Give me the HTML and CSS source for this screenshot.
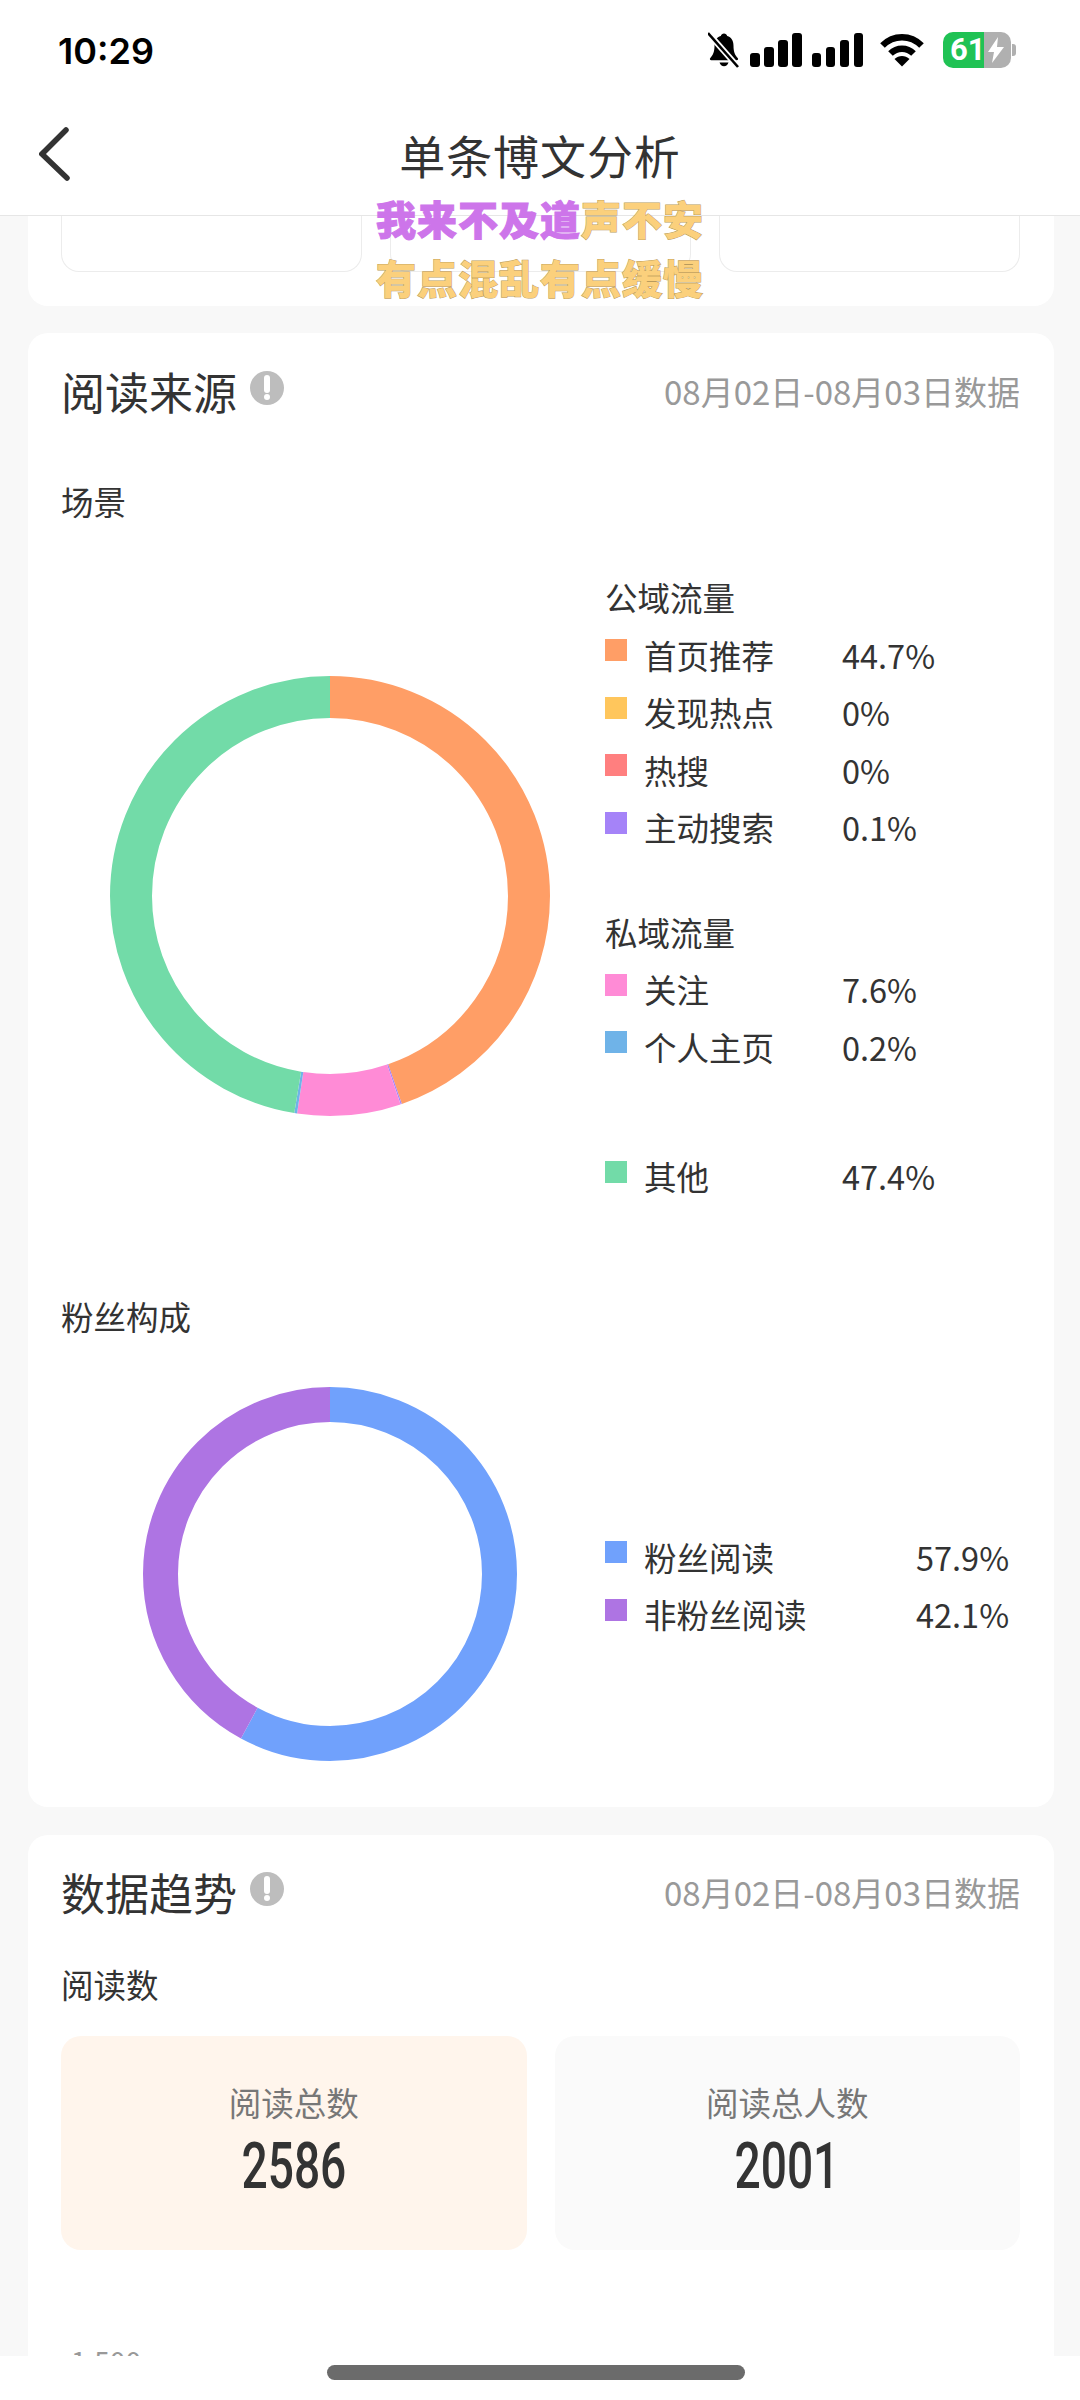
FILE: index.html
```html
<!DOCTYPE html>
<html lang="zh-CN">
<head>
  <meta charset="UTF-8" />
  <meta name="viewport" content="width=device-width, initial-scale=1" />
  <title>单条博文分析</title>
  <link rel="stylesheet" href="styles.css">
</head>
<body>
  <div class="screen">
    <header class="top">
      <div class="statusbar">
        <span class="time">10:29</span>
        <div class="status-icons">
          <svg class="ic-bell" width="32" height="36" viewBox="0 0 32 36">
            <path d="M16 1.5c1.6 0 2.8 1 3.2 2.6 4.2 1.3 6.3 4.8 6.3 9.6 0 5.6 1.2 9 4.2 12.2.9 1 .3 2.3-1 2.3H3.3c-1.3 0-1.9-1.3-1-2.3 3-3.2 4.2-6.6 4.2-12.2 0-4.8 2.1-8.3 6.3-9.6.4-1.6 1.6-2.6 3.2-2.6z" fill="#000"/>
            <path d="M11.5 30.5h9c-.6 2.3-2.4 3.7-4.5 3.7s-3.9-1.4-4.5-3.7z" fill="#000"/>
            <path d="M1 2l29 33" stroke="#fff" stroke-width="6"/>
            <path d="M0 1l30 34" stroke="#000" stroke-width="2.6"/>
          </svg>
          <div class="signal"><i class="b1"></i><i class="b2"></i><i class="b3"></i><i class="b4"></i></div>
          <div class="signal"><i class="b1"></i><i class="b2"></i><i class="b3"></i><i class="b4"></i></div>
          <svg class="ic-wifi" width="46" height="34" viewBox="0 0 46 34">
            <path d="M3.5 12.5C14.5 1.5 31.5 1.5 42.5 12.5" fill="none" stroke="#000" stroke-width="6.5"/>
            <path d="M11.5 20.5C18 14 28 14 34.5 20.5" fill="none" stroke="#000" stroke-width="6.5"/>
            <path d="M15.5 26c4.3-4 10.7-4 15 0L23 33.5z" fill="#000"/>
          </svg>
          <div class="battery">
            <span class="battery-num">61</span>
            <svg class="ic-bolt" width="18" height="26" viewBox="0 0 18 26">
              <path d="M11 0L1 15h6l-2 11L17 10h-7z" fill="#fff"/>
            </svg>
          </div>
        </div>
      </div>
      <nav class="navbar">
        <svg class="ic-back" width="34" height="56" viewBox="0 0 34 56">
          <path d="M27 3L3 27l25 24" fill="none" stroke="#333" stroke-width="5.5" stroke-linecap="round" stroke-linejoin="miter"/>
        </svg>
        <h1 class="nav-title">单条博文分析</h1>
      </nav>
    </header>

    <!-- 上一张卡片，只露出底部 -->
    <section class="card card-stub">
      <div class="stub-box"></div>
      <div class="stub-box"></div>
      <div class="stub-box"></div>
    </section>

    <!-- 阅读来源 -->
    <section class="card card-source">
      <div class="card-head">
        <h2 class="card-title">阅读来源</h2>
        <svg class="ic-info" width="34" height="34" viewBox="0 0 34 34">
          <circle cx="17" cy="17" r="17" fill="#bdbdbd"/>
          <path d="M17 7v12" stroke="#fff" stroke-width="6" stroke-linecap="round"/>
          <circle cx="17" cy="26" r="3" fill="#fff"/>
        </svg>
        <span class="card-date">08月02日-08月03日数据</span>
      </div>

      <div class="sub-title sub-scene">场景</div>
      <div class="chart-row chart-scene">
        <div class="donut-cell">
          <svg class="donut" width="440" height="440" viewBox="0 0 440 440">
            <g fill="none" stroke-width="42" transform="rotate(-90 220 220)">
              <circle cx="220" cy="220" r="199" pathLength="100" stroke="#ff9e66" stroke-dasharray="44.7 55.3" stroke-dashoffset="0"/>
              <circle cx="220" cy="220" r="199" pathLength="100" stroke="#a583f8" stroke-dasharray="0.1 99.9" stroke-dashoffset="-44.7"/>
              <circle cx="220" cy="220" r="199" pathLength="100" stroke="#ff8bd6" stroke-dasharray="7.6 92.4" stroke-dashoffset="-44.8"/>
              <circle cx="220" cy="220" r="199" pathLength="100" stroke="#6fb3e8" stroke-dasharray="0.2 99.8" stroke-dashoffset="-52.4"/>
              <circle cx="220" cy="220" r="199" pathLength="100" stroke="#72dba8" stroke-dasharray="47.4 52.6" stroke-dashoffset="-52.6"/>
            </g>
          </svg>
        </div>
        <div class="legend">
          <div class="legend-group group-public">
            <div class="legend-head">公域流量</div>
            <div class="legend-row"><i class="swatch c-orange"></i><span class="legend-name">首页推荐</span><span>44.7%</span></div>
            <div class="legend-row"><i class="swatch c-yellow"></i><span class="legend-name">发现热点</span><span>0%</span></div>
            <div class="legend-row"><i class="swatch c-red"></i><span class="legend-name">热搜</span><span>0%</span></div>
            <div class="legend-row"><i class="swatch c-purple"></i><span class="legend-name">主动搜索</span><span>0.1%</span></div>
          </div>
          <div class="legend-group group-private">
            <div class="legend-head">私域流量</div>
            <div class="legend-row"><i class="swatch c-pink"></i><span class="legend-name">关注</span><span>7.6%</span></div>
            <div class="legend-row"><i class="swatch c-blue"></i><span class="legend-name">个人主页</span><span>0.2%</span></div>
          </div>
          <div class="legend-group">
            <div class="legend-row"><i class="swatch c-green"></i><span class="legend-name">其他</span><span>47.4%</span></div>
          </div>
        </div>
      </div>

      <div class="sub-title sub-fans">粉丝构成</div>
      <div class="chart-row chart-fans">
        <div class="donut-cell">
          <svg class="donut" width="374" height="374" viewBox="0 0 374 374">
            <g fill="none" stroke-width="35" transform="rotate(-90 187 187)">
              <circle cx="187" cy="187" r="169.5" pathLength="100" stroke="#70a1fc" stroke-dasharray="57.9 42.1" stroke-dashoffset="0"/>
              <circle cx="187" cy="187" r="169.5" pathLength="100" stroke="#ae74e3" stroke-dasharray="42.1 57.9" stroke-dashoffset="-57.9"/>
            </g>
          </svg>
        </div>
        <div class="legend legend-fans">
          <div class="legend-row"><i class="swatch c-fans"></i><span class="legend-name">粉丝阅读</span><span>57.9%</span></div>
          <div class="legend-row"><i class="swatch c-nonfans"></i><span class="legend-name">非粉丝阅读</span><span>42.1%</span></div>
        </div>
      </div>
    </section>

    <!-- 数据趋势 -->
    <section class="card card-trend">
      <div class="card-head">
        <h2 class="card-title">数据趋势</h2>
        <svg class="ic-info" width="34" height="34" viewBox="0 0 34 34">
          <circle cx="17" cy="17" r="17" fill="#bdbdbd"/>
          <path d="M17 7v12" stroke="#fff" stroke-width="6" stroke-linecap="round"/>
          <circle cx="17" cy="26" r="3" fill="#fff"/>
        </svg>
        <span class="card-date">08月02日-08月03日数据</span>
      </div>
      <div class="sub-title sub-read">阅读数</div>
      <div class="stats">
        <div class="stat stat-active">
          <div class="stat-label">阅读总数</div>
          <div class="stat-num"><span>2586</span></div>
        </div>
        <div class="stat">
          <div class="stat-label">阅读总人数</div>
          <div class="stat-num"><span>2001</span></div>
        </div>
      </div>
      <div class="axis-label">1,500</div>
    </section>

    <!-- 歌词浮层 -->
    <div class="lyrics">
      <div class="lyric-line"><span class="lyric-done">我来不及道</span>声不安</div>
      <div class="lyric-line">有点混乱有点缓慢</div>
    </div>

    <div class="homebar"><span class="home-pill"></span></div>
  </div>
</body>
</html>
```

FILE: styles.css
```css
/* Base */
html, body {
  margin: 0;
  padding: 0;
}

body {
  font-family: "Noto Sans CJK SC", "Noto Sans", sans-serif;
  color: #333;
  background-color: #f8f8f8;
}

.screen {
  position: relative;
  width: 1080px;
  height: 2400px;
  overflow: hidden;
  background-color: #f8f8f8;
}

/* Status bar + nav */
.top {
  background-color: #fff;
  border-bottom: 1px solid #e6e6e6;
}

.statusbar {
  height: 95px;
  box-sizing: border-box;
  padding: 32px 69px 0 58px;
  display: flex;
  align-items: flex-start;
}

.time {
  font-family: Inter, sans-serif;
  font-size: 36px;
  font-weight: 600;
  line-height: 38px;
  color: #000;
}

.status-icons {
  margin-left: auto;
  display: flex;
  align-items: center;
}

.ic-bell { margin-right: 10px; }
.ic-wifi { margin: 0 18px 0 6px; }

.signal {
  display: flex;
  align-items: flex-end;
  gap: 4.5px;
  height: 34px;
  margin-right: 10px;
}

.signal i {
  display: block;
  width: 9.5px;
  background-color: #000;
  border-radius: 3px;
}

.signal .b1 { height: 14px; }
.signal .b2 { height: 20px; }
.signal .b3 { height: 27px; }
.signal .b4 { height: 34px; }

.battery {
  position: relative;
  width: 68px;
  height: 36px;
  border-radius: 10px;
  background: linear-gradient(to right, #20c254 0, #20c254 60%, #b0b0b0 60%, #b0b0b0 100%);
  display: flex;
  align-items: center;
  padding-left: 7px;
  box-sizing: border-box;
}

.battery::after {
  content: "";
  position: absolute;
  right: -5px;
  top: 12px;
  width: 4px;
  height: 12px;
  border-radius: 0 3px 3px 0;
  background-color: #b0b0b0;
}

.battery-num {
  font-family: Roboto, sans-serif;
  font-size: 31px;
  font-weight: 700;
  color: #fff;
  line-height: 36px;
}

.ic-bolt { margin-left: 1px; }

.navbar {
  height: 120px;
  display: flex;
  align-items: center;
  position: relative;
  justify-content: center;
}

.ic-back {
  position: absolute;
  left: 39px;
  top: 32px;
}

.nav-title {
  margin: -2px 0 0;
  font-size: 46px;
  font-weight: 400;
  letter-spacing: 0.9px;
  line-height: 60px;
  color: #333;
}

/* Cards */
.card {
  margin: 0 26px 0 28px;
  padding: 0 34px 0 33px;
  background-color: #fff;
  border-radius: 20px;
}

.card-stub {
  height: 90px;
  margin-bottom: 27px;
  border-radius: 0 0 20px 20px;
  display: grid;
  grid-template-columns: repeat(3, 301px);
  column-gap: 28px;
}

.stub-box {
  height: 56px;
  box-sizing: border-box;
  border: 1px solid #ececec;
  border-top: none;
  border-radius: 0 0 18px 18px;
}

.card-source {
  height: 1474px;
  margin-bottom: 28px;
}

.card-trend {
  height: 560px;
}

.card-head {
  padding-top: 28px;
  height: 88px;
  box-sizing: border-box;
  display: flex;
  align-items: center;
}

.card-trend .card-head {
  padding-top: 27px;
  height: 87px;
}

.card-title {
  margin: 0;
  font-size: 44px;
  font-weight: 400;
  line-height: 60px;
  color: #333;
}

.ic-info {
  margin: -6px 0 0 13px;
}

.card-date {
  margin-left: auto;
  font-size: 33px;
  line-height: 60px;
  color: #999;
}

.sub-title {
  font-size: 32.5px;
  line-height: 44px;
  color: #333;
}

.sub-scene { margin-top: 58px; }
.sub-fans { margin-top: 89px; }
.sub-read { margin-top: 40px; }

/* Charts */
.chart-row {
  display: flex;
  align-items: flex-start;
}

.chart-scene { margin-top: 45px; }
.chart-fans { margin-top: 49px; }

.donut-cell {
  width: 538px;
  margin-right: 6px;
  display: flex;
  justify-content: center;
}

.chart-scene .donut-cell { padding-top: 108px; }

.donut { display: block; }

.legend {
  flex: 1;
  font-size: 32.5px;
  color: #333;
}

.legend-fans { margin-top: 141px; }
.legend-fans .legend-name { width: 272px; }

.legend-head,
.legend-row {
  height: 57.5px;
  line-height: 57.5px;
}

.legend-row {
  display: flex;
  align-items: center;
}

.legend-name { width: 198px; }

.group-public { margin-bottom: 47px; }
.group-private { margin-bottom: 72px; }

.swatch {
  display: block;
  width: 22px;
  height: 22px;
  margin: -8px 17px 0 0;
}

.c-orange { background-color: #ff9e66; }
.c-yellow { background-color: #ffc65c; }
.c-red { background-color: #ff7f7f; }
.c-purple { background-color: #a583f8; }
.c-pink { background-color: #ff8bd6; }
.c-blue { background-color: #6fb3e8; }
.c-green { background-color: #72dba8; }
.c-fans { background-color: #70a1fc; }
.c-nonfans { background-color: #ae74e3; }

/* Stats */
.stats {
  margin-top: 30px;
  display: grid;
  grid-template-columns: 1fr 1fr;
  column-gap: 28px;
}

.stat {
  height: 214px;
  box-sizing: border-box;
  padding-top: 44px;
  border-radius: 20px;
  background-color: #fafafa;
  text-align: center;
}

.stat-active {
  background-color: #fff5ec;
}

.stat-label {
  font-size: 32.5px;
  line-height: 44px;
  color: #777;
}

.stat-num {
  margin-top: 2px;
  height: 80px;
  font-family: Roboto, sans-serif;
  font-size: 65px;
  font-weight: 500;
  line-height: 80px;
  color: #333;
}

.stat-num span {
  display: inline-block;
  transform: scaleX(0.71);
}

.axis-label {
  margin: 96px 0 0 10px;
  font-size: 28px;
  line-height: 30px;
  color: #999;
}

/* Lyrics overlay */
.lyrics {
  position: absolute;
  left: 0;
  right: 0;
  top: 189px;
  text-align: center;
  font-size: 40px;
  font-weight: 900;
  line-height: 59px;
  letter-spacing: 1px;
  color: #fbd07c;
  -webkit-text-stroke: 1px #b89a5c;
  paint-order: stroke fill;
}

.lyric-line { white-space: nowrap; }

.lyric-done {
  color: #cd75ea;
  -webkit-text-stroke: 1px #cd75ea;
}

/* Home indicator */
.homebar {
  position: absolute;
  left: 0;
  right: 0;
  top: 2356px;
  height: 44px;
  background-color: #fff;
}

.home-pill {
  position: absolute;
  left: 327px;
  top: 9px;
  width: 418px;
  height: 15px;
  border-radius: 8px;
  background-color: #6b6b6b;
}
```
